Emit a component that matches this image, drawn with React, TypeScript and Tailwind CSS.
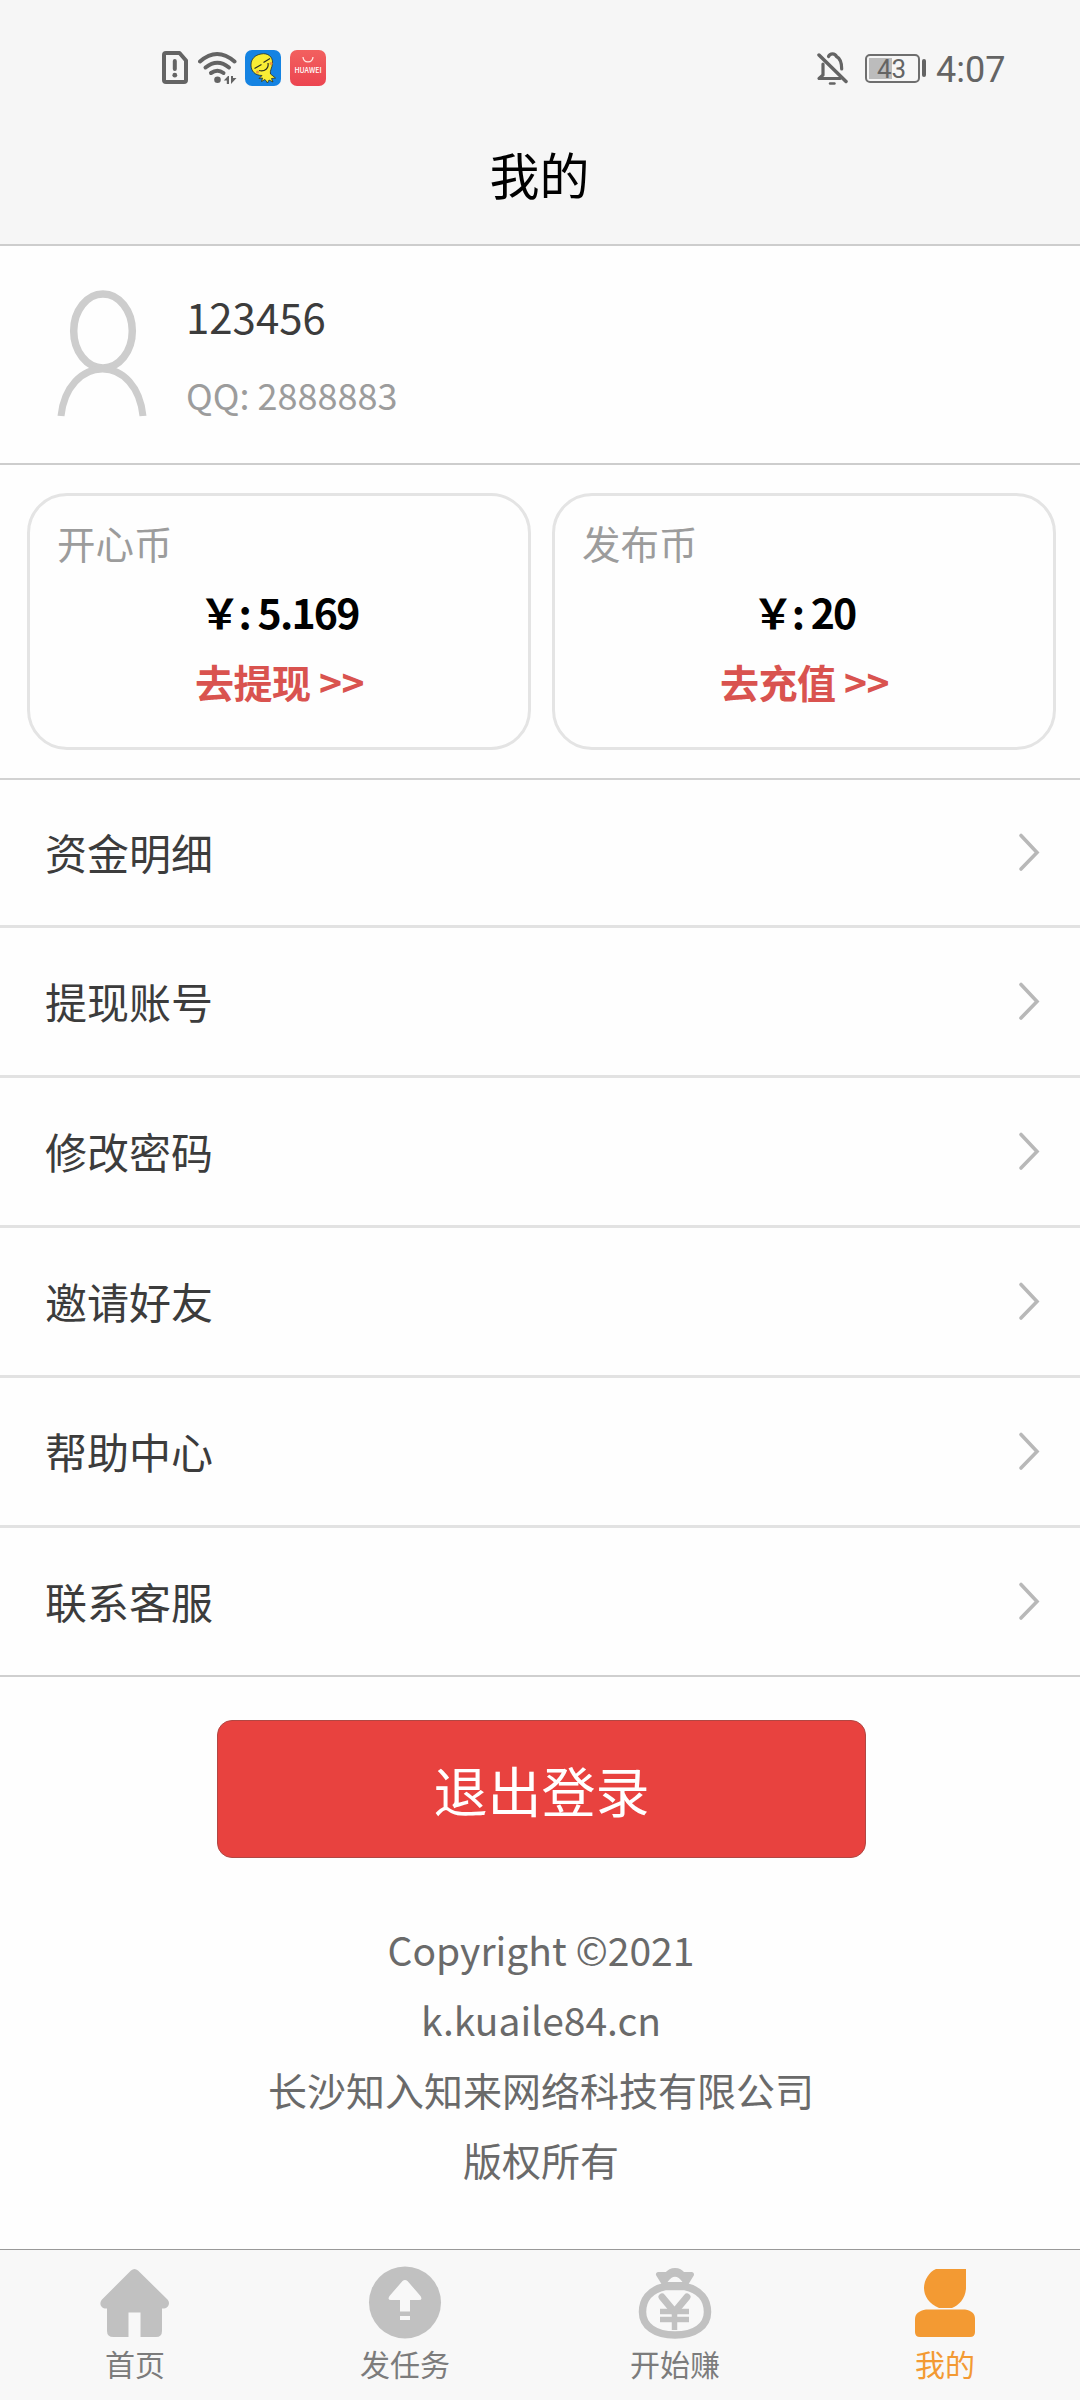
import React from "react";

const MENU = ["资金明细", "提现账号", "修改密码", "邀请好友", "帮助中心", "联系客服"];

function SimAlertIcon() {
  return (
    <svg className="h-9 w-7" viewBox="161 50 28 36" fill="none" stroke="#646464" strokeWidth="4" strokeLinejoin="round" strokeLinecap="round">
      <path d="M166 53H179.5L186 60.5V80a2 2 0 0 1-2 2H166a2 2 0 0 1-2-2V55a2 2 0 0 1 2-2Z" />
      <path d="M174.8 61V69" />
      <circle cx="174.8" cy="75.2" r="2.4" fill="#646464" stroke="none" />
    </svg>
  );
}

function WifiIcon() {
  return (
    <svg className="h-9 w-10" viewBox="198 50 40 36" fill="none" stroke="#646464" strokeWidth="4" strokeLinecap="round">
      <path d="M200 61.5Q217 46.500 234.500 61.500" />
      <path d="M205.500 67.500Q217.500 58 229 67.500" />
      <path d="M211 73Q217.500 68.500 223.500 73" />
      <circle cx="217.500" cy="79.800" r="3.300" fill="#646464" stroke="none" />
      <path d="M229 76V84H226.800V80.500H223.800L228 76ZM231 76V84L236.500 78H233V76Z" fill="#646464" stroke="none" />
    </svg>
  );
}

function GhostAppIcon() {
  return (
    <svg className="size-9" viewBox="0 0 36 36">
      <rect width="36" height="36" rx="7" fill="#1583e2" />
      <path
        d="M16 4C23 2.500 28 7 27.500 13C27.200 18 24.500 21 25.500 24L30.500 28L26.500 28.500L28 32L24 30L22.500 33L20 29.500L16.500 31.500L17.500 28L14 28.500L17 25.500C10 25.500 6 21 6 15C6 9 10 5 16 4Z"
        fill="#f8ed35"
        stroke="#2c3020"
        strokeWidth="0.8"
      />
      <path d="M9.500 18.500L16.500 14.500M18.500 12.500L25 8.500M14 20.500C20 22 24 18 23 13" fill="none" stroke="#2c3020" strokeWidth="1.200" />
      <circle cx="12.500" cy="22" r="1.500" fill="#ef9a3c" />
      <circle cx="26" cy="13.500" r="1.500" fill="#ef9a3c" />
    </svg>
  );
}

function HuaweiAppIcon() {
  return (
    <div className="flex size-9 flex-col items-center rounded-[7px] bg-linear-to-b from-[#f2605f] to-[#ec4450] pt-[7px]">
      <svg className="h-[6px] w-3" viewBox="0 0 12 6" fill="none" stroke="#ffe4df" strokeWidth="1.300">
        <path d="M1 0C1.500 6.500 10.500 6.500 11 0" />
      </svg>
      <span className="mt-[3px] text-[7px] leading-[9px] font-medium text-white">HUAWEI</span>
    </div>
  );
}

function BellOffIcon() {
  return (
    <svg className="h-9 w-8" viewBox="816 50 32 36" fill="none" stroke="#646464" strokeWidth="3.200" strokeLinecap="round" strokeLinejoin="round">
      <path d="M823 64V75L819 78.500H840M828.500 56.500C830 53 835 53 836.500 56.500C840.500 58.500 841.700 62 841.700 69" />
      <path d="M819 55L846 81.500" strokeWidth="3.500" />
      <path d="M830 83.500H834.500" strokeWidth="2.400" />
    </svg>
  );
}

function StatusBar() {
  return (
    <div className="flex h-[106px] items-start justify-between pr-[75px] pl-[161px] pt-[50px]">
      <div className="flex items-center">
        <SimAlertIcon />
        <span className="ml-[9px] flex"><WifiIcon /></span>
        <span className="ml-[7px] flex"><GhostAppIcon /></span>
        <span className="ml-[9px] flex"><HuaweiAppIcon /></span>
      </div>
      <div className="flex h-9 items-center font-[Roboto,sans-serif] text-[#646464]">
        <BellOffIcon />
        <div className="mt-px ml-[17px] flex h-[29px] w-[55px] rounded-[5px] border-2 border-[#6e6e6e] p-[2px]">
          <div className="flex w-[23px] items-center justify-start bg-[#bcbcbc] pl-[8px] text-[26px] leading-none">43</div>
        </div>
        <div className="ml-[2px] h-[18px] w-[4px] rounded-[2px] bg-[#646464]" />
        <span className="mt-[3px] ml-[10px] w-[69px] text-[36px] leading-9">4:07</span>
      </div>
    </div>
  );
}

function ProfileIcon() {
  return (
    <svg className="h-[132px] w-[92px]" viewBox="56 288 92 132" fill="none" stroke="#cdcdcd" strokeWidth="7.500">
      <ellipse cx="103" cy="331" rx="29.300" ry="37" />
      <path d="M61 416C64 387 82 369 102.500 369C123 369 140 387 143 416" strokeWidth="7" />
    </svg>
  );
}

function BalanceCard({ title, amount, action }: { title: string; amount: string; action: string }) {
  return (
    <div className="h-[257px] w-[504px] rounded-[40px] border-[3px] border-[#e4e4e4] bg-[#fefefe] pt-[11px] text-center">
      <div className="h-[70px] pl-[27px] text-left text-[38.500px] leading-[70px] text-[#9c9c9c]">{title}</div>
      <div className="text-[41px] leading-[69px] font-bold tracking-[-1.800px] text-black">￥: {amount}</div>
      <div className="pl-px text-[39px] leading-[70px] font-bold tracking-[-0.500px] text-[#d9534f]">{action} &gt;&gt;</div>
    </div>
  );
}

function MenuRow({ label }: { label: string }) {
  return (
    <li className="flex h-[150px] items-center justify-between border-b-[3px] border-[#e2e2e2] pr-10 pb-[2px] pl-[45px] first:h-[148px] last:h-[149px] last:border-b-2 last:border-[#cfcfcf]">
      <span className="text-[42px] leading-[60px] text-[#3c3c3c]">{label}</span>
      <svg className="h-10 w-[22px]" viewBox="0 0 22 40" fill="none" stroke="#b8b8b8" strokeWidth="3.600" strokeLinecap="round">
        <path d="M3 3.500L19 20.500L3 37" />
      </svg>
    </li>
  );
}

function HomeIcon() {
  return (
    <svg className="size-[74px]" viewBox="98 2266 74 74" fill="#c1c1c1">
      <path d="M131 2270.500Q134.500 2267.500 138 2270.500L167.500 2299.500C171 2303.500 168 2309 162 2308.500V2331Q162 2337 156 2337H140.500V2312.500H128.500V2337H113.500Q107 2337 107 2331V2308.500C101 2309 98.500 2303.500 102 2299.500Z" />
    </svg>
  );
}

function PublishIcon() {
  return (
    <svg className="size-[74px]" viewBox="368 2266 74 74">
      <circle cx="405" cy="2302.500" r="36" fill="#c1c1c1" />
      <path d="M402.500 2281Q405 2279 407.500 2281L420.500 2296Q423 2300 419 2300H410V2311.500H400V2300H391Q387 2300 389.500 2296ZM400 2316H410V2320H400Z" fill="#f8f8f8" />
    </svg>
  );
}

function MoneyBagIcon() {
  return (
    <svg className="size-[74px]" viewBox="638 2266 74 74" fill="none" stroke="#c1c1c1" strokeWidth="7.500" strokeLinejoin="round">
      <path d="M665 2286.500C649 2290 642.500 2300 642.500 2312C642.500 2326 655 2335 675 2335C695 2335 707.500 2326 707.500 2312C707.500 2300 701 2290 685 2286.500Z" />
      <path d="M665 2285L658.500 2274.500L667 2274.500C671 2269 679 2269 683 2274.500L691.500 2274.500L685 2285Z" strokeWidth="5" fill="#c1c1c1" />
      <path d="M667.500 2282Q675 2271.500 682.500 2282Z" fill="#f8f8f8" stroke="none" />
      <path d="M662 2297L674.500 2312L687 2297" strokeWidth="7" strokeLinecap="round" />
      <path d="M674.500 2310V2330M660 2311.500H689M660 2319.500H689" strokeWidth="5.500" strokeLinejoin="miter" />
    </svg>
  );
}

function MineIcon() {
  return (
    <svg className="size-[74px]" viewBox="908 2266 74 74" fill="#f39a33">
      <path d="M936 2269H966V2289C965 2299 959 2305 952 2308H939C929 2304 924 2296 924 2288C924 2280 929 2272 936 2269Z" />
      <path d="M926 2309.500H965C972 2310.500 975 2314 975 2319V2332Q975 2337 970 2337H920Q915 2337 915 2332V2319C915 2314 919 2310.500 926 2309.500Z" />
    </svg>
  );
}

function NavItem({ icon, label, active = false }: { icon: React.ReactNode; label: string; active?: boolean }) {
  return (
    <div className={active ? "flex flex-col items-center text-[#f39a33]" : "flex flex-col items-center text-[#7c7c7c]"}>
      {icon}
      <span className="mt-px text-[30px] leading-11">{label}</span>
    </div>
  );
}

export default function App() {
  return (
    <div className="flex h-[2400px] w-[1080px] flex-col overflow-hidden bg-[#fefefe] font-['Noto_Sans_CJK_SC',sans-serif]">
      <header className="h-[246px] border-b-2 border-[#cdcdcd] bg-[#f6f6f6]">
        <StatusBar />
        <h1 className="pr-px text-center text-[50px] leading-[134px] text-black">我的</h1>
      </header>

      <section className="flex h-[219px] border-b-2 border-[#cdcdcd] pt-[42px] pl-14">
        <ProfileIcon />
        <div className="ml-[38px]">
          <div className="text-[42px] leading-[56px] text-[#3c3c3c]">123456</div>
          <div className="mt-[22px] text-[36px] leading-[56px] text-[#9c9c9c]">QQ: 2888883</div>
        </div>
      </section>

      <section className="flex h-[315px] gap-[21px] border-b-2 border-[#d2d2d2] pt-7 pl-[27px]">
        <BalanceCard title="开心币" amount="5.169" action="去提现" />
        <BalanceCard title="发布币" amount="20" action="去充值" />
      </section>

      <ul>
        {MENU.map((label) => (
          <MenuRow key={label} label={label} />
        ))}
      </ul>

      <button className="mt-[43px] ml-[217px] h-[138px] w-[649px] rounded-[15px] border border-[#b14743] bg-[#e8423f] text-[54px] text-white">
        退出登录
      </button>

      <footer className="mt-[56px] pl-[2px] text-center text-[39px] leading-[70px] text-[#6a6a6a]">
        <p>Copyright ©2021</p>
        <p>k.kuaile84.cn</p>
        <p>长沙知入知来网络科技有限公司</p>
        <p>版权所有</p>
      </footer>

      <nav className="mt-auto grid h-[151px] grid-cols-4 border-t border-[#999] bg-[#f8f8f8] pt-[16px]">
        <NavItem icon={<HomeIcon />} label="首页" />
        <NavItem icon={<PublishIcon />} label="发任务" />
        <NavItem icon={<MoneyBagIcon />} label="开始赚" />
        <NavItem icon={<MineIcon />} label="我的" active />
      </nav>
    </div>
  );
}
